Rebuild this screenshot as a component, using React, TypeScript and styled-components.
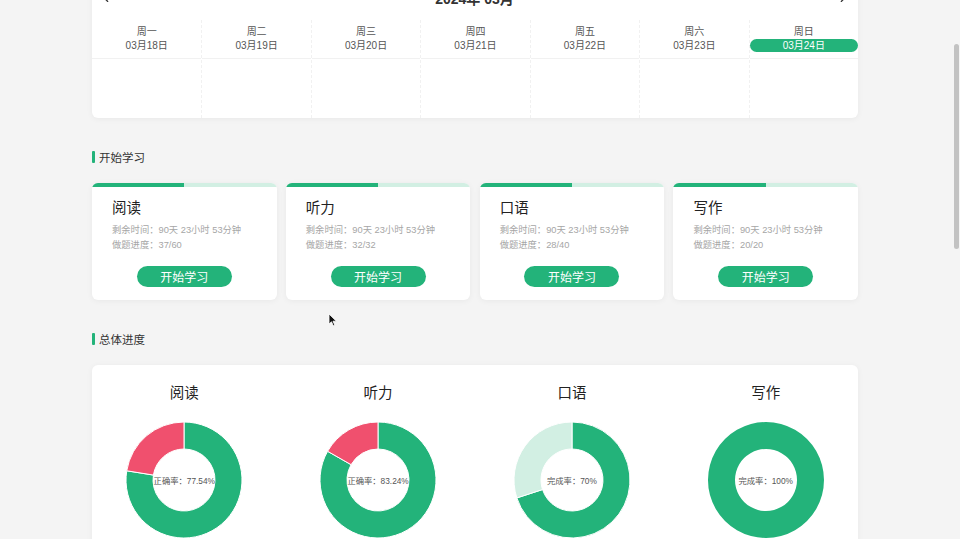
import React, { useLayoutEffect } from "react";
import styled, { createGlobalStyle } from "styled-components";
import { ChevronLeft, ChevronRight } from "lucide-react";

const GREEN = "#23b37a";
const LIGHT = "#d2efe3";
const RED = "#f0506e";

const GlobalStyle = createGlobalStyle`
  html { background: #f4f4f4; }
  html::-webkit-scrollbar { width: 0; }
  body {
    margin: 0;
    background: #f4f4f4;
    font-family: "Liberation Sans", "Noto Sans CJK SC", sans-serif;
    color: #333;
  }
  * { box-sizing: border-box; }
`;

const Page = styled.div`
  min-height: 1417px;
  padding: 92px 10px 40px 0;
`;

const Container = styled.div`
  width: 766px;
  margin: 0 auto;
`;

const Card = styled.div`
  background: #fff;
  border-radius: 6px;
  box-shadow: 0 1px 6px rgba(0, 0, 0, 0.05);
  overflow: hidden;
`;

const CalHeader = styled.div`
  height: 44px;
  display: flex;
  align-items: center;
  justify-content: space-between;
  padding: 0 8px 0 7px;
  font-size: 14px;
  font-weight: 600;
  color: #333;
`;

const ArrowBtn = styled.span`
  display: flex;
  align-items: center;
  color: #333;
`;

const WeekGrid = styled.div`
  display: grid;
  grid-template-columns: repeat(7, 1fr);
`;

const DayCol = styled.div<{ $first?: boolean }>`
  display: flex;
  flex-direction: column;
  border-left: ${(p) => (p.$first ? "none" : "1px dashed #f1f1f1")};
`;

const DayHead = styled.div`
  height: 39px;
  padding-top: 5px;
  display: flex;
  flex-direction: column;
  align-items: center;
  border-bottom: 1px solid #f1f1f1;
  font-size: 10px;
  color: #555;
`;

const DayName = styled.div`
  line-height: 14px;
  height: 14px;
`;

const DayDate = styled.div<{ $active?: boolean }>`
  align-self: stretch;
  height: 13px;
  line-height: 13px;
  text-align: center;
  border-radius: 7px;
  background: ${(p) => (p.$active ? GREEN : "transparent")};
  color: ${(p) => (p.$active ? "#fff" : "#555")};
`;

const DayBody = styled.div`
  height: 59px;
`;

const SectionTitle = styled.div`
  margin: 31px 0 18px;
  display: flex;
  align-items: center;
  gap: 4px;
  height: 16px;
  font-size: 11.5px;
  color: #333;
  &::before {
    content: "";
    width: 3px;
    height: 12px;
    background: ${GREEN};
    border-radius: 1px;
  }
`;

const FourGrid = styled.div`
  display: grid;
  grid-template-columns: repeat(4, 1fr);
  column-gap: 9.3px;
`;

const StudyCard = styled(Card)`
  height: 117px;
  display: flex;
  flex-direction: column;
`;

const Progress = styled.div`
  height: 4px;
  background: ${LIGHT};
  flex-shrink: 0;
`;

const ProgressFill = styled.div`
  height: 100%;
  background: ${GREEN};
`;

const StudyBody = styled.div`
  padding: 11px 20px 0;
  display: flex;
  flex-direction: column;
`;

const StudyTitle = styled.div`
  font-size: 14.5px;
  line-height: 20px;
  color: #222;
`;

const InfoLines = styled.div`
  margin-top: 5px;
  font-size: 9.3px;
  line-height: 15px;
  color: #a6a6a6;
`;

const StartButton = styled.button`
  margin: 13px auto 0;
  width: 95px;
  height: 21px;
  border: none;
  border-radius: 11px;
  background: ${GREEN};
  color: #fff;
  font-family: inherit;
  font-size: 12px;
  padding: 0;
  cursor: pointer;
`;

const ChartCard = styled(Card)`
  padding: 18px 0 40px;
`;

const ChartCol = styled.div`
  display: flex;
  flex-direction: column;
  align-items: center;
`;

const ChartTitle = styled.div`
  font-size: 14.5px;
  line-height: 20px;
  color: #222;
  margin-bottom: 18px;
`;

const DonutWrap = styled.div`
  position: relative;
  width: 118px;
  height: 118px;
`;

const DonutLabel = styled.div`
  position: absolute;
  inset: 0;
  display: flex;
  align-items: center;
  justify-content: center;
  font-size: 8.3px;
  color: #555;
  white-space: nowrap;
`;

const Cursor = styled.svg`
  position: fixed;
  left: 328px;
  top: 313px;
  pointer-events: none;
`;

const ScrollThumb = styled.div`
  position: fixed;
  right: 1px;
  top: 44px;
  width: 5px;
  height: 205px;
  border-radius: 3px;
  background: #c2c2c2;
`;

function pt(cx: number, cy: number, r: number, deg: number) {
  const a = ((deg - 90) * Math.PI) / 180;
  return [cx + r * Math.cos(a), cy + r * Math.sin(a)];
}

function arc(cx: number, cy: number, R: number, r: number, s: number, e: number) {
  const large = e - s > 180 ? 1 : 0;
  const [x1, y1] = pt(cx, cy, R, s);
  const [x2, y2] = pt(cx, cy, R, e);
  const [x3, y3] = pt(cx, cy, r, e);
  const [x4, y4] = pt(cx, cy, r, s);
  return `M${x1} ${y1} A${R} ${R} 0 ${large} 1 ${x2} ${y2} L${x3} ${y3} A${r} ${r} 0 ${large} 0 ${x4} ${y4} Z`;
}

function Donut({ pct, rest, label }: { pct: number; rest: string; label: string }) {
  const cx = 59, cy = 59, R = 58, r = 31;
  const end = pct * 3.6;
  return (
    <DonutWrap>
      <svg width="118" height="118" viewBox="0 0 118 118">
        {pct >= 100 ? (
          <path
            d={`M${cx} ${cy - R} A${R} ${R} 0 1 1 ${cx - 0.01} ${cy - R} Z M${cx} ${cy - r} A${r} ${r} 0 1 0 ${cx + 0.01} ${cy - r} Z`}
            fill={GREEN}
            fillRule="evenodd"
          />
        ) : (
          <>
            <path d={arc(cx, cy, R, r, 0, end)} fill={GREEN} stroke="#fff" strokeWidth="1" />
            <path d={arc(cx, cy, R, r, end, 360)} fill={rest} stroke="#fff" strokeWidth="1" />
          </>
        )}
      </svg>
      <DonutLabel>{label}</DonutLabel>
    </DonutWrap>
  );
}

const days = [
  ["周一", "03月18日"],
  ["周二", "03月19日"],
  ["周三", "03月20日"],
  ["周四", "03月21日"],
  ["周五", "03月22日"],
  ["周六", "03月23日"],
  ["周日", "03月24日"],
];

const studies = [
  { name: "阅读", prog: "37/60" },
  { name: "听力", prog: "32/32" },
  { name: "口语", prog: "28/40" },
  { name: "写作", prog: "20/20" },
];

const charts = [
  { name: "阅读", pct: 77.54, rest: RED, label: "正确率：77.54%" },
  { name: "听力", pct: 83.24, rest: RED, label: "正确率：83.24%" },
  { name: "口语", pct: 70, rest: LIGHT, label: "完成率：70%" },
  { name: "写作", pct: 100, rest: LIGHT, label: "完成率：100%" },
];

export default function App() {
  useLayoutEffect(() => {
    window.scrollTo(0, 116);
    const t = setTimeout(() => window.scrollTo(0, 116), 50);
    return () => clearTimeout(t);
  }, []);

  return (
    <>
      <GlobalStyle />
      <Page>
        <Container>
          <Card>
            <CalHeader>
              <ArrowBtn>
                <ChevronLeft size={14} strokeWidth={2} />
              </ArrowBtn>
              <span>2024年 03月</span>
              <ArrowBtn>
                <ChevronRight size={14} strokeWidth={2} />
              </ArrowBtn>
            </CalHeader>
            <WeekGrid>
              {days.map(([n, d], i) => (
                <DayCol key={d} $first={i === 0}>
                  <DayHead>
                    <DayName>{n}</DayName>
                    <DayDate $active={i === 6}>{d}</DayDate>
                  </DayHead>
                  <DayBody />
                </DayCol>
              ))}
            </WeekGrid>
          </Card>

          <SectionTitle>开始学习</SectionTitle>
          <FourGrid>
            {studies.map((s) => (
              <StudyCard key={s.name}>
                <Progress>
                  <ProgressFill style={{ width: "50%" }} />
                </Progress>
                <StudyBody>
                  <StudyTitle>{s.name}</StudyTitle>
                  <InfoLines>
                    <div>剩余时间：90天 23小时 53分钟</div>
                    <div>做题进度：{s.prog}</div>
                  </InfoLines>
                  <StartButton>开始学习</StartButton>
                </StudyBody>
              </StudyCard>
            ))}
          </FourGrid>

          <SectionTitle>总体进度</SectionTitle>
          <ChartCard>
            <FourGrid>
              {charts.map((c) => (
                <ChartCol key={c.name}>
                  <ChartTitle>{c.name}</ChartTitle>
                  <Donut pct={c.pct} rest={c.rest} label={c.label} />
                </ChartCol>
              ))}
            </FourGrid>
          </ChartCard>
        </Container>
      </Page>
      <ScrollThumb />
      <Cursor width="10" height="14" viewBox="0 0 10 14">
        <path d="M1 1 L1 11 L3.5 8.8 L5.3 12.8 L6.8 12.1 L5 8.2 L8.4 8.2 Z" fill="#111" stroke="#fff" strokeWidth="0.8" />
      </Cursor>
    </>
  );
}
